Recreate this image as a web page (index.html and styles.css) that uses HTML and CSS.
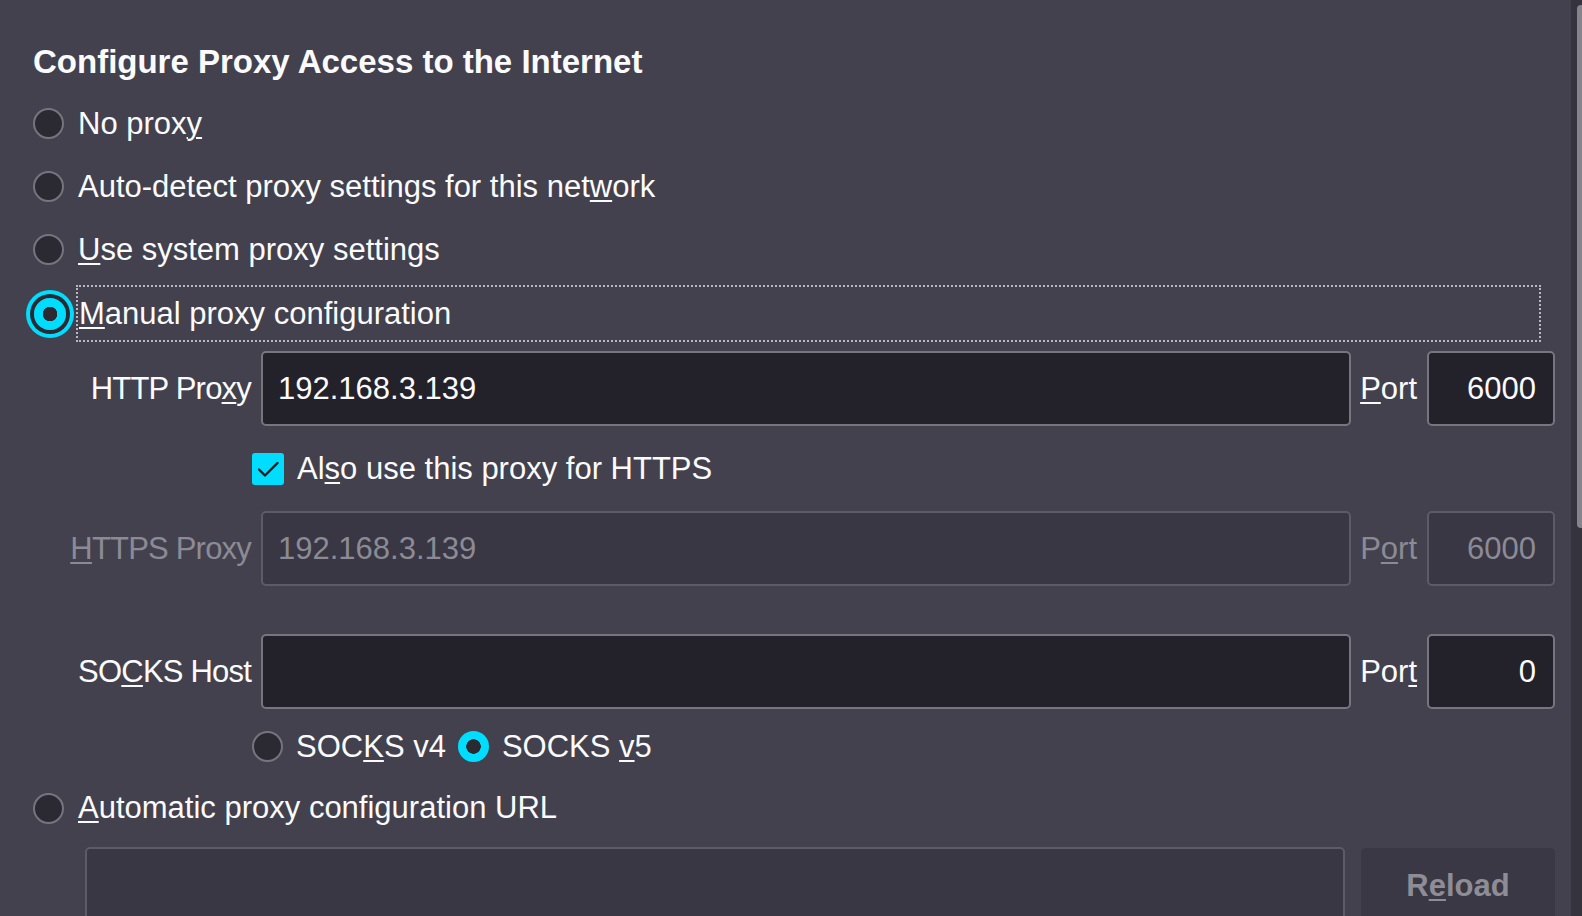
FILE: index.html
```html
<!DOCTYPE html>
<html lang="en">
<head>
<meta charset="utf-8">
<title>Connection Settings</title>
<link rel="stylesheet" href="styles.css">
</head>
<body>
<div class="window">
  <main class="content">
    <h1 class="title">Configure Proxy Access to the Internet</h1>

    <div class="options">
      <div class="radio-row"><span class="radio"></span><span class="text">No prox<u>y</u></span></div>
      <div class="radio-row"><span class="radio"></span><span class="text">Auto-detect proxy settings for this net<u>w</u>ork</span></div>
      <div class="radio-row"><span class="radio"></span><span class="text"><u>U</u>se system proxy settings</span></div>
      <div class="radio-row manual"><span class="radio checked focused"></span><span class="focus-box"><u>M</u>anual proxy configuration</span></div>
    </div>

    <div class="proxy-grid">
      <span class="field-label">HTTP Pro<u>x</u>y</span>
      <div class="input">192.168.3.139</div>
      <span class="port-label"><u>P</u>ort</span>
      <div class="input port">6000</div>

      <div class="check-row">
        <span class="checkbox"><svg width="32" height="32" viewBox="0 0 32 32"><path d="M7 16.5 L13 22.5 L25.5 10" fill="none" stroke="#1c1b22" stroke-width="2.4" stroke-linecap="round" stroke-linejoin="round"/></svg></span>
        <span class="text">Al<u>s</u>o use this proxy for HTTPS</span>
      </div>

      <span class="field-label disabled"><u>H</u>TTPS Proxy</span>
      <div class="input disabled">192.168.3.139</div>
      <span class="port-label disabled">P<u>o</u>rt</span>
      <div class="input port disabled">6000</div>

      <div class="spacer"></div>

      <span class="field-label">SO<u>C</u>KS Host</span>
      <div class="input"></div>
      <span class="port-label">Por<u>t</u></span>
      <div class="input port">0</div>

      <div class="socks-row">
        <span class="radio"></span><span class="text">SOC<u>K</u>S v4</span>
        <span class="radio checked v5"></span><span class="text">SOCKS <u>v</u>5</span>
      </div>
    </div>

    <div class="radio-row auto"><span class="radio"></span><span class="text"><u>A</u>utomatic proxy configuration URL</span></div>

    <div class="url-row">
      <div class="input disabled url"></div>
      <div class="button">R<u>e</u>load</div>
    </div>
  </main>
  <div class="scrollbar"><div class="thumb"></div></div>
</div>
</body>
</html>
```

FILE: styles.css
```css
html, body {
  margin: 0;
  padding: 0;
  height: 916px;
  overflow: hidden;
  background: #42414d;
}

body {
  font-family: "Liberation Sans", Arial, sans-serif;
  font-size: 31px;
  color: #fbfbfe;
}

u {
  text-decoration: underline;
  text-decoration-thickness: 2px;
  text-underline-offset: 3px;
}

.window {
  display: flex;
  height: 916px;
}

.content {
  flex: 1;
  padding: 0 16px 0 33px;
  min-width: 0;
}

.title {
  margin: 42px 0 0 0;
  font-size: 33px;
  line-height: 40px;
  font-weight: bold;
}

.options {
  margin-top: 10px;
  display: flex;
  flex-direction: column;
}

.radio-row {
  display: flex;
  align-items: center;
  height: 63px;
  gap: 14px;
  line-height: 36px;
  white-space: nowrap;
}

.radio {
  flex: none;
  width: 31px;
  height: 31px;
  box-sizing: border-box;
  border-radius: 50%;
  background: #2b2a33;
  border: 2px solid #76757f;
}

.radio.checked {
  border: none;
  background: radial-gradient(circle, #2b2a33 0 7px, #00ddff 7.5px);
}

.radio.focused {
  box-shadow: 0 0 0 4px #2b2a33, 0 0 0 8px #00ddff;
  width: 32px;
  height: 32px;
}

.radio-row.manual {
  height: 57px;
  margin-top: 4px;
  gap: 10px;
  margin-left: 1px;
  margin-right: 14px;
}

.focus-box {
  flex: 1;
  height: 57px;
  box-sizing: border-box;
  border: 2px dotted #b9b8c0;
  padding-left: 1px;
  display: flex;
  align-items: center;
  line-height: 36px;
}

.proxy-grid {
  margin-top: 9px;
  display: grid;
  grid-template-columns: 218px 1fr auto 128px;
  grid-template-rows: 75px 85px 75px 48px 75px 75px;
  column-gap: 10px;
  align-items: center;
}

.field-label {
  justify-self: end;
  white-space: nowrap;
  letter-spacing: -0.8px;
}

.port-label {
  white-space: nowrap;
  margin-left: -1px;
}

.disabled {
  color: #8c8b95;
}

.input {
  height: 75px;
  box-sizing: border-box;
  border: 2px solid #77767f;
  border-radius: 5px;
  background: #23222b;
  display: flex;
  align-items: center;
  padding: 0 17px 0 15px;
  white-space: nowrap;
}

.input.port {
  justify-content: flex-end;
}

.input.disabled {
  background: #383743;
  border-color: #5c5b66;
}

.check-row {
  grid-column: 2 / -1;
  margin-left: -9px;
  display: flex;
  align-items: center;
  gap: 13px;
}

.checkbox {
  width: 32px;
  height: 32px;
  border-radius: 3px;
  background: #00ddff;
  display: block;
}

.checkbox svg {
  display: block;
}

.spacer {
  grid-column: 1 / -1;
}

.socks-row {
  grid-column: 2 / -1;
  margin-left: -9px;
  display: flex;
  align-items: center;
  gap: 13px;
  white-space: nowrap;
}

.socks-row .radio.v5 {
  margin-left: -1px;
}

.radio-row.auto {
  height: 48px;
}

.url-row {
  margin-top: 15px;
  padding-left: 52px;
  display: flex;
  gap: 16px;
  align-items: flex-start;
}

.input.url {
  flex: 1;
}

.button {
  width: 194px;
  height: 75px;
  margin-top: 1px;
  border-radius: 5px;
  background: #393844;
  color: #8e8d96;
  font-weight: bold;
  display: flex;
  align-items: center;
  justify-content: center;
}

.scrollbar {
  flex: none;
  width: 11px;
  height: 916px;
  background: #35343e;
  overflow: hidden;
}

.thumb {
  margin: 5px 0 0 6px;
  width: 10px;
  height: 523px;
  border-radius: 4px;
  background: #85848d;
}
```
